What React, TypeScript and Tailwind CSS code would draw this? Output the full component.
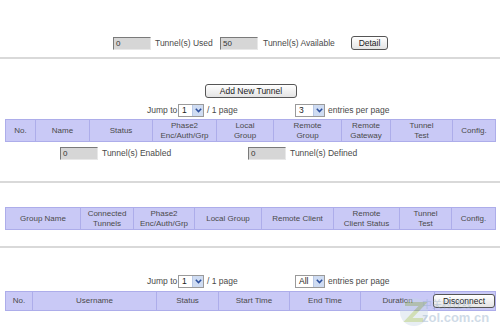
import React from "react";

const font = { fontFamily: '"Liberation Sans", Arial, sans-serif' };

function GreyInput({ value, w = 38 }: { value: string; w?: number }) {
  return (
    <div
      className="h-[13px] bg-[#d6d6d6] border border-t-[#7a7a7a] border-l-[#7a7a7a] border-b-[#e8e8e8] border-r-[#e8e8e8] text-[8px] leading-[11px] pl-[2px] text-[#333]"
      style={{ width: w }}
    >
      {value}
    </div>
  );
}

function Btn({ label, w, cls = "" }: { label: string; w: number; cls?: string }) {
  return (
    <div
      className={`h-[14px] rounded-[3px] border border-[#555] bg-gradient-to-b from-white to-[#e4e4e4] flex items-center justify-center text-[8.5px] text-[#222] ${cls}`}
      style={{ width: w }}
    >
      {label}
    </div>
  );
}

function Select({ value, w = 27 }: { value: string; w?: number }) {
  return (
    <div
      className="h-[13px] border border-[#9a9a9a] bg-white flex items-stretch"
      style={{ width: w }}
    >
      <div className="flex-1 text-[8.5px] leading-[11px] pl-[3px] text-[#222]">{value}</div>
      <div className="w-[11px] bg-[#cfdcf2] border-l border-[#b8c8e6] flex items-center justify-center">
        <svg width="7" height="5" viewBox="0 0 7 5">
          <path d="M0.8 0.8 L3.5 3.6 L6.2 0.8" fill="none" stroke="#2c4f9e" strokeWidth="1.5" />
        </svg>
      </div>
    </div>
  );
}

function Header({ cols, h }: { cols: [string, number][]; h: number }) {
  return (
    <div
      className="ml-[5px] w-[491px] flex bg-[#c9c9f6] border border-[#adadea]"
      style={{ height: h }}
    >
      {cols.map(([t, w], i) => (
        <div
          key={i}
          className={`flex items-center justify-center text-center text-[8px] leading-[10px] text-[#4a4a4a] ${
            i < cols.length - 1 ? "border-r border-[#adadea]" : "flex-1"
          }`}
          style={i < cols.length - 1 ? { width: w } : undefined}
        >
          <span className="whitespace-pre-line">{t}</span>
        </div>
      ))}
    </div>
  );
}

export default function App() {
  return (
    <div className="w-[500px] h-[332px] bg-white relative overflow-hidden" style={font}>
      <div className="pt-[36px]">
        <div className="flex items-center h-[14px] text-[8.5px] text-[#4a4a4a]">
          <div className="ml-[113px]"><GreyInput value="0" /></div>
          <span className="ml-[4px] w-[65px]">Tunnel(s) Used</span>
          <GreyInput value="50" />
          <span className="ml-[5px] w-[88px]">Tunnel(s) Available</span>
          <Btn label="Detail" w={37} />
        </div>

        <div className="mt-[7px] h-[2px] bg-[#d9d9d9]" />

        <div className="mt-[25px] ml-[205px]">
          <Btn label="Add New Tunnel" w={92} />
        </div>

        <div className="mt-[6px] flex items-center h-[13px] text-[8.5px] text-[#4a4a4a]">
          <span className="ml-[147px] w-[31px]">Jump to</span>
          <Select value="1" w={26} />
          <span className="ml-[3px] w-[88px]">/ 1 page</span>
          <Select value="3" w={30} />
          <span className="ml-[3px]">entries per page</span>
        </div>

        <div className="mt-[2px]">
          <Header
            h={23}
            cols={[
              ["No.", 30],
              ["Name", 54],
              ["Status", 63],
              ["Phase2\nEnc/Auth/Grp", 64],
              ["Local\nGroup", 57],
              ["Remote\nGroup", 68],
              ["Remote\nGateway", 49],
              ["Tunnel\nTest", 62],
              ["Config.", 44],
            ]}
          />
        </div>

        <div className="mt-[5px] flex items-center h-[13px] text-[8.5px] text-[#4a4a4a]">
          <div className="ml-[60px]"><GreyInput value="0" /></div>
          <span className="ml-[4px] w-[146px]">Tunnel(s) Enabled</span>
          <GreyInput value="0" />
          <span className="ml-[4px]">Tunnel(s) Defined</span>
        </div>

        <div className="mt-[21px] h-[2px] bg-[#d9d9d9]" />

        <div className="mt-[24px]">
          <Header
            h={23}
            cols={[
              ["Group Name", 75],
              ["Connected\nTunnels", 53],
              ["Phase2\nEnc/Auth/Grp", 61],
              ["Local Group", 67],
              ["Remote Client", 72],
              ["Remote\nClient Status", 66],
              ["Tunnel\nTest", 52],
              ["Config.", 45],
            ]}
          />
        </div>

        <div className="mt-[16px] h-[2px] bg-[#d9d9d9]" />

        <div className="mt-[27px] flex items-center h-[13px] text-[8.5px] text-[#4a4a4a]">
          <span className="ml-[147px] w-[31px]">Jump to</span>
          <Select value="1" w={26} />
          <span className="ml-[3px] w-[88px]">/ 1 page</span>
          <Select value="All" w={30} />
          <span className="ml-[3px]">entries per page</span>
        </div>

        <div className="mt-[3px] relative">
          <Header
            h={20}
            cols={[
              ["No.", 27],
              ["Username", 124],
              ["Status", 62],
              ["Start Time", 71],
              ["End Time", 71],
              ["Duration", 74],
              ["", 60],
            ]}
          />
          <div className="absolute left-[433px] top-[3px]">
            <Btn label="Disconnect" w={62} cls="h-[13px]" />
          </div>
        </div>
      </div>

      <div className="absolute left-[396px] top-[296px] opacity-40 pointer-events-none">
        <svg width="36" height="32" viewBox="0 0 36 32">
          <circle cx="18" cy="16" r="14" fill="#c7d6e6" />
          <path d="M9 8 L27 8 L12 24 L27 24" fill="none" stroke="#8fb04a" strokeWidth="4" />
        </svg>
      </div>
      <div className="absolute left-[422px] top-[299px] opacity-40 pointer-events-none text-[#8aa6c4] leading-none">
        <div className="text-[10px]" style={{ fontFamily: '"Noto Sans CJK SC", sans-serif' }}>中关村在线</div>
        <div className="text-[13px] font-bold mt-[2px]" style={font}>zol.com.cn</div>
      </div>
    </div>
  );
}
